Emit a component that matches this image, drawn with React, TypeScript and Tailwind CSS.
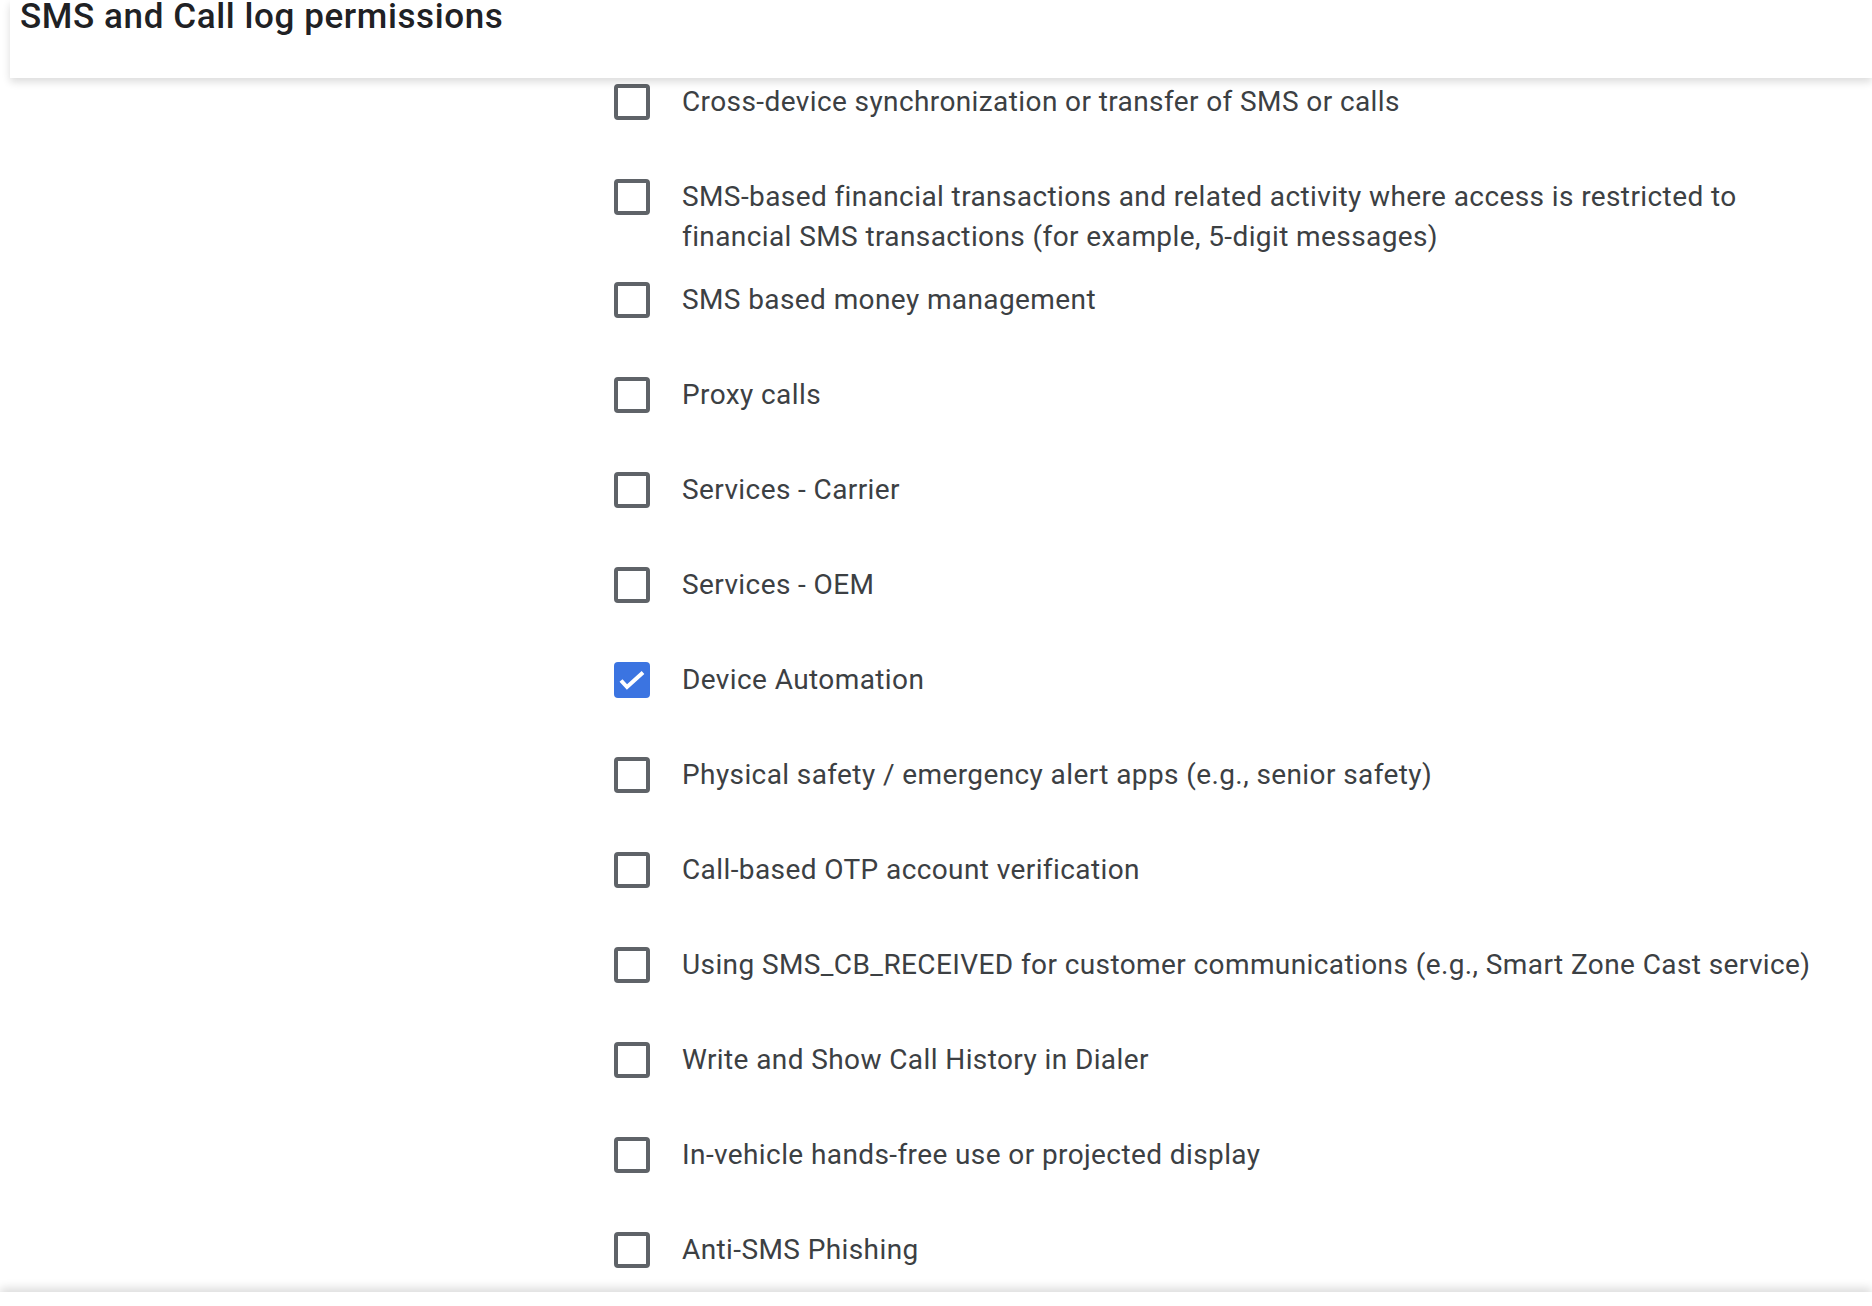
import React from "react";

const items = [
  { label: "Cross-device synchronization or transfer of SMS or calls" },
  {
    label:
      "SMS-based financial transactions and related activity where access is restricted to financial SMS transactions (for example, 5-digit messages)",
  },
  { label: "SMS based money management" },
  { label: "Proxy calls" },
  { label: "Services - Carrier" },
  { label: "Services - OEM" },
  { label: "Device Automation", checked: true },
  { label: "Physical safety / emergency alert apps (e.g., senior safety)" },
  { label: "Call-based OTP account verification" },
  {
    label:
      "Using SMS_CB_RECEIVED for customer communications (e.g., Smart Zone Cast service)",
  },
  { label: "Write and Show Call History in Dialer" },
  { label: "In-vehicle hands-free use or projected display" },
  { label: "Anti-SMS Phishing" },
];

const Checkbox = ({ checked }: { checked?: boolean }) => {
  if (checked) {
    return (
      <div className="mt-[2px] h-9 w-9 shrink-0 rounded-[4px] bg-[#3b74e1]">
        <svg viewBox="0 0 36 36" className="h-9 w-9">
          <polyline
            points="7,18.5 13,25 29,10.5"
            fill="none"
            stroke="white"
            strokeWidth="4"
          />
        </svg>
      </div>
    );
  }
  return (
    <div className="mt-[2px] h-9 w-9 shrink-0 rounded-[4px] border-4 border-[#5f6368] bg-white" />
  );
};

const App = () => {
  return (
    <div className="flex h-[1306px] flex-col overflow-hidden bg-white font-['Roboto',sans-serif] text-[#3c4043]">
      <header className="relative z-10 ml-[10px] h-[78px] shrink-0 bg-white shadow-[0_4px_8px_rgba(0,0,0,0.14)]">
        <h1 className="-mt-[3px] ml-[10px] font-['Roboto',sans-serif] text-[35px] font-medium leading-[40px] tracking-[0.6px] text-[#202124]">
          SMS and Call log permissions
        </h1>
      </header>
      <main className="flex-1 overflow-hidden pl-[614px] pt-[4px]">
        {items.map((item) => (
          <div key={item.label} className="flex min-h-[95px] items-start gap-8">
            <Checkbox checked={item.checked} />
            <p className="pb-[23px] pr-[60px] text-[28px] leading-[40px] tracking-[0.4px]">
              {item.label}
            </p>
          </div>
        ))}
      </main>
      <footer className="relative z-10 h-[14px] shrink-0 bg-white shadow-[0_-4px_10px_rgba(0,0,0,0.14)]" />
    </div>
  );
};

export default App;
